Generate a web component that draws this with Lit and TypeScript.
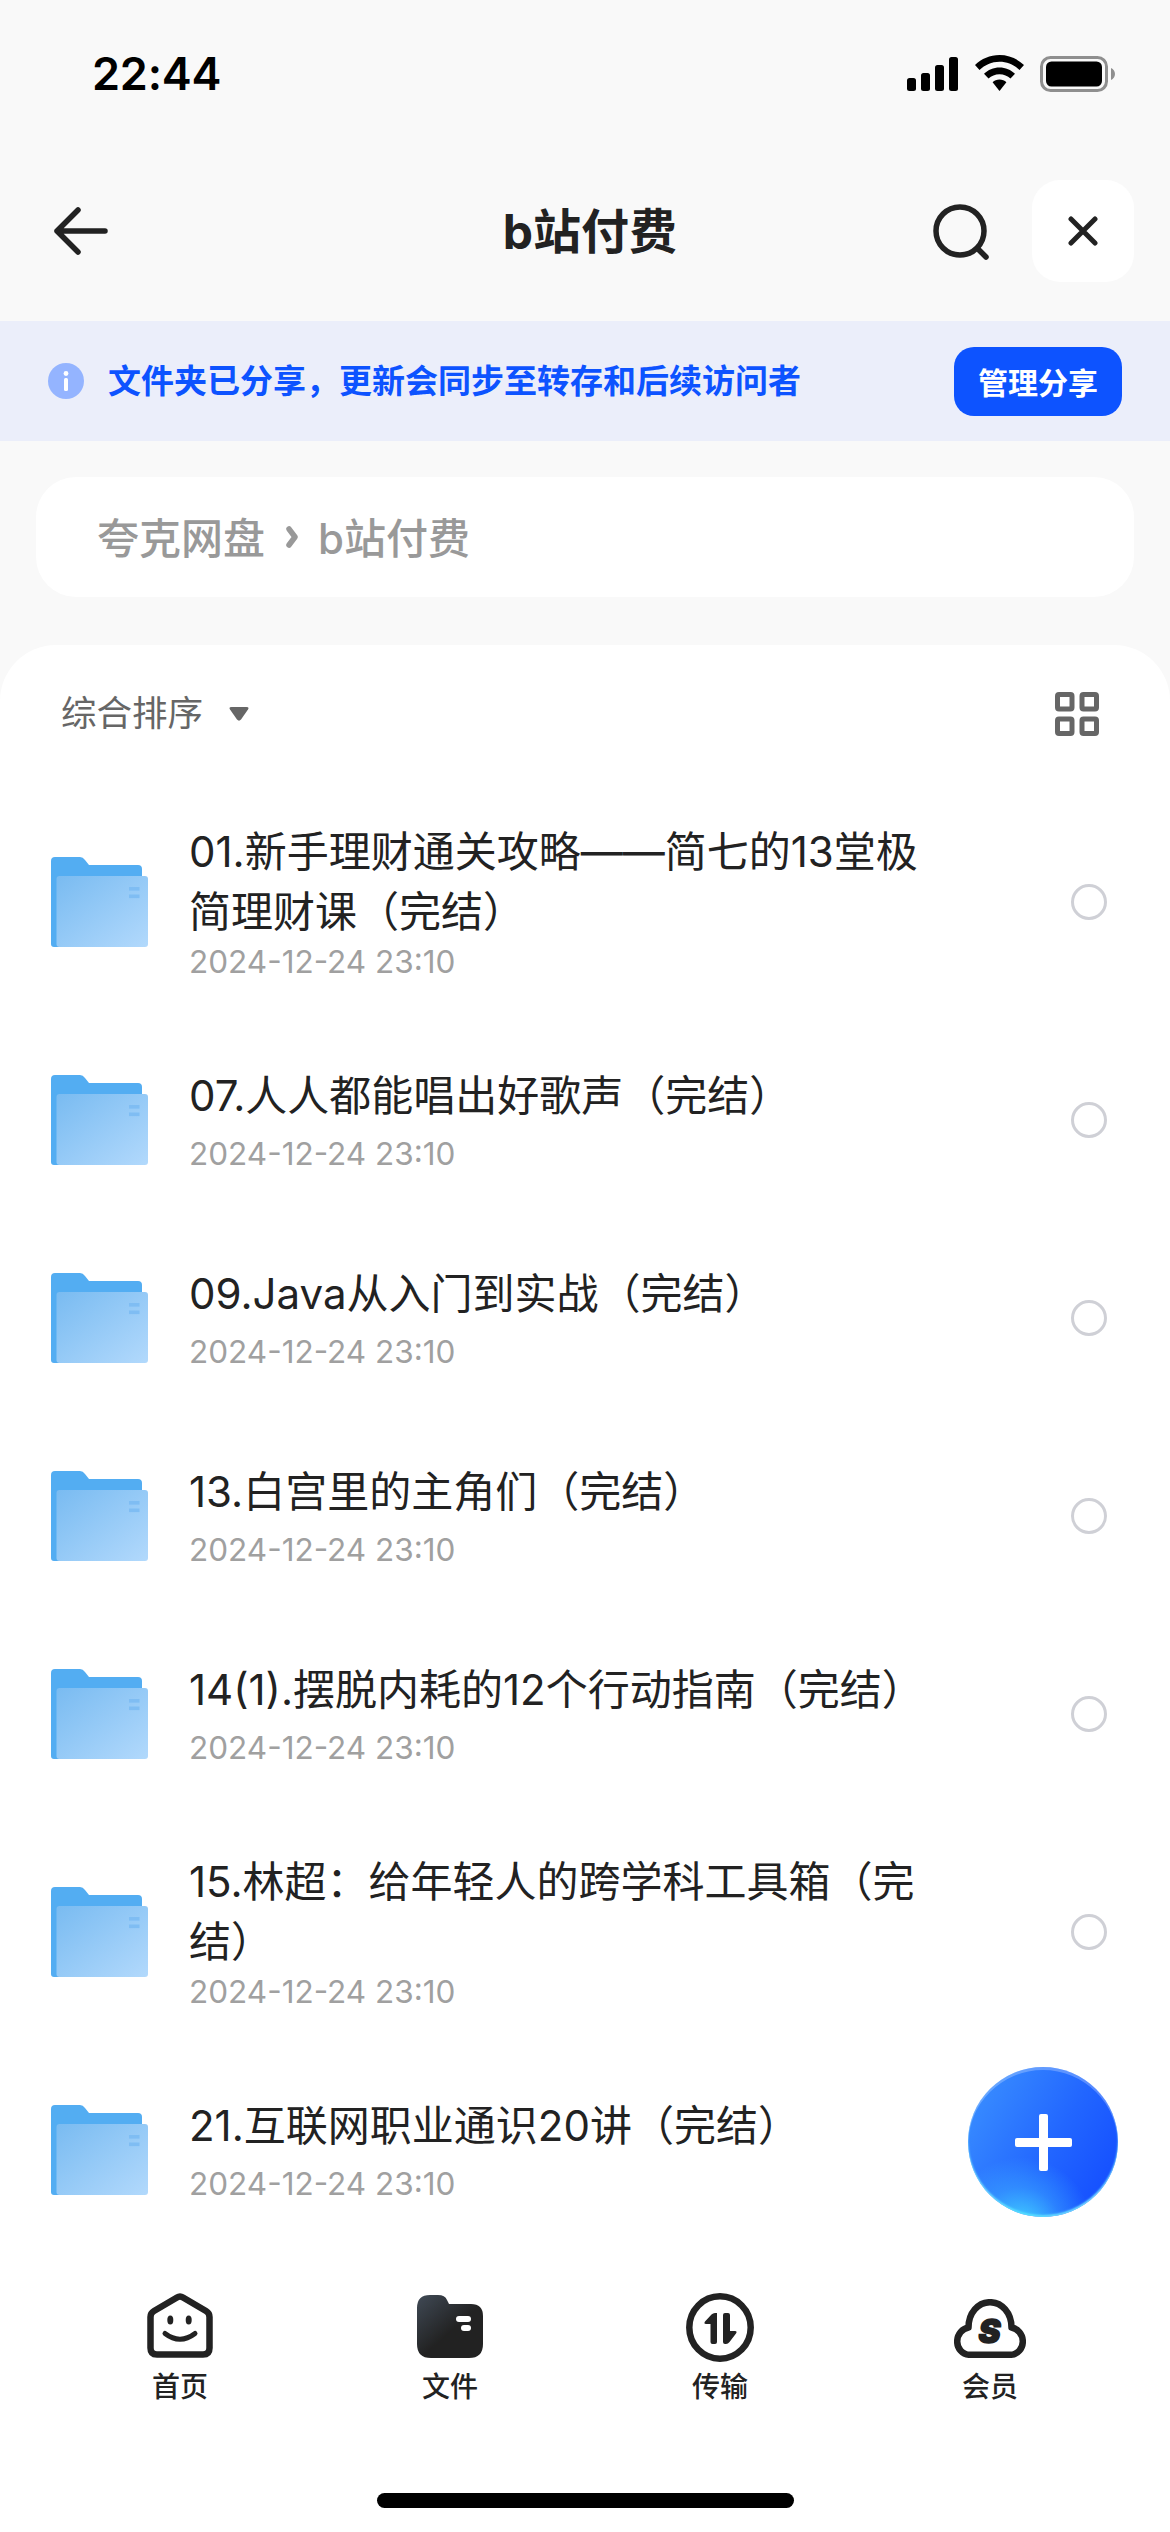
import { LitElement, html, css } from "lit";
import { customElement } from "lit/decorators.js";

const rows = [
  { t: "01.新手理财通关攻略——简七的13堂极简理财课（完结）", multi: true },
  { t: "07.人人都能唱出好歌声（完结）", multi: false },
  { t: "09.Java从入门到实战（完结）", multi: false },
  { t: "13.白宫里的主角们（完结）", multi: false },
  { t: "14(1).摆脱内耗的12个行动指南（完结）", multi: false },
  { t: "15.林超：给年轻人的跨学科工具箱（完结）", multi: true },
  { t: "21.互联网职业通识20讲（完结）", multi: false },
];

const folder = (i: number) => html`<svg class="folder" viewBox="0 0 97 90" width="97" height="90">
  <defs><linearGradient id="fg${i}" x1="0" y1="0" x2="1" y2="1">
    <stop offset="0" stop-color="#79bbf1"/><stop offset="1" stop-color="#b2d9fc"/>
  </linearGradient></defs>
  <path d="M4 0H29Q32 0 34 3L38 8H87Q91 8 91 12V90H3Q0 90 0 87V4Q0 0 4 0Z" fill="#53adf2"/>
  <rect x="5.5" y="19" width="91.5" height="71" rx="3" fill="url(#fg${i})"/>
  <rect x="78" y="30" width="10.5" height="3.6" fill="#7fbdf3"/>
  <rect x="78" y="37.5" width="10.5" height="3.6" fill="#7fbdf3"/>
</svg>`;

@customElement("app-root")
export class AppRoot extends LitElement {
  static styles = css`
    :host {
      display: flex; flex-direction: column; width: 1170px; height: 2532px; overflow: hidden;
      position: relative; background: #f9f9f9; color: #222;
      font-family: Inter, "Noto Sans CJK SC", sans-serif;
    }
    .status { height: 109px; flex: none; display: flex; align-items: flex-start; justify-content: space-between; padding: 50px 55px 0 92px; box-sizing: border-box; }
    .time { font-size: 45px; line-height: 48px; font-weight: 600; color: #000; letter-spacing: -0.2px; }
    .sicons { display: flex; align-items: flex-start; gap: 17px; margin-top: 5px; }
    .sig { margin-top: 2px; }
    .bat { margin-top: 1px; margin-left: -1px; }
    .nav { height: 212px; flex: none; box-sizing: border-box; padding: 71px 36px 0 54px; display: flex; align-items: flex-start; position: relative; }
    .nav .back { margin-top: 27px; }
    .title { position: absolute; left: 10px; right: 0; top: 93px; text-align: center; font-size: 48px; line-height: 60px; font-weight: 700; color: #222; }
    .nav .search { margin-left: auto; margin-top: 24px; }
    .closebtn { width: 102px; height: 102px; margin-left: 43px; background: #fff; border-radius: 28px; display: flex; align-items: center; justify-content: center; }
    .banner { height: 120px; flex: none; background: #ebeefa; display: flex; align-items: center; padding: 0 48px 0 48px; box-sizing: border-box; }
    .info { margin-right: 24px; flex: none; }
    .banner .msg { font-size: 33px; font-weight: 700; color: #0d53ff; line-height: 44px; }
    .mgr { margin-left: auto; width: 168px; height: 69px; border-radius: 20px; background: #0d53ff; color: #fff; font-size: 30px; font-weight: 700; display: flex; align-items: center; justify-content: center; }
    .crumb { flex: none; margin: 36px 36px 48px; height: 120px; border-radius: 40px; background: #fff; display: flex; align-items: center; box-sizing: border-box; padding: 0 0 3px 61px; font-size: 42px; font-weight: 500; color: #999; }
    .crumb svg { margin: 3px 20px 0 21px; }
    .sheet { flex: 1; min-height: 0; background: #fff; border-radius: 56px 56px 0 0; display: flex; flex-direction: column; }
    .tools { height: 137.5px; flex: none; box-sizing: border-box; display: flex; align-items: flex-start; padding: 44px 71px 0 61px; }
    .sort { font-size: 35.5px; color: #666; line-height: 50px; }
    .tri { margin: 18px 0 0 26px; }
    .grid { margin: 3px 0 0 auto; }
    .row { display: flex; align-items: center; height: 198px; padding: 0 63px 0 51px; box-sizing: border-box; }
    .row.multi { height: 238px; }
    .folder { flex: none; margin-right: 41px; }
    .body { width: 735px; display: flex; flex-direction: column; gap: 8px; }
    .multi .body { gap: 0; }
    .name { font-size: 42px; line-height: 60px; color: #222; }
    .date { font-size: 31.5px; line-height: 40px; color: #a0a0a0; }
    .radio { margin-left: auto; width: 36px; height: 36px; border-radius: 50%; border: 3px solid #cfd0d6; box-sizing: border-box; flex: none; }
    .spacer { flex: 1; }
    .tabs { flex: none; display: grid; grid-template-columns: repeat(4, 270px); padding: 0 45px; height: 145px; }
    .tab { display: flex; flex-direction: column; align-items: center; justify-content: flex-end; font-size: 28px; line-height: 36px; font-weight: 500; color: #222; }
    .tab .ic { height: 70px; display: flex; align-items: flex-end; justify-content: center; margin-bottom: 11px; }
    .ic .transfer { margin-bottom: -4px; }
    .homebar { flex: none; height: 127px; display: flex; justify-content: center; align-items: flex-start; box-sizing: border-box; padding-top: 88px; }
    .indicator { width: 417px; height: 15px; border-radius: 7.5px; background: #000; }
    .fab { position: absolute; left: 968px; top: 2067px; width: 150px; height: 150px; border-radius: 50%;
      background: linear-gradient(120deg, #3d94ff 0%, #2266ff 55%, #1148ff 100%);
      display: flex; align-items: center; justify-content: center; overflow: hidden;
      box-shadow: inset 0 3px 0 rgba(255,255,255,.25), inset 0 -2px 2px rgba(130,240,255,.9); }
    .fab::before { content: ""; position: absolute; inset: 0; border-radius: 50%; background: radial-gradient(circle at 35% 108%, rgba(70,225,255,.95) 0%, rgba(70,200,255,.35) 22%, rgba(70,200,255,0) 38%); }
    .fab svg { position: relative; }
  `;

  render() {
    return html`
      <div class="status">
        <div class="time">22:44</div>
        <div class="sicons">
          <svg class="sig" width="51" height="34" viewBox="0 0 51 34" fill="#000">
            <rect x="0" y="21" width="9" height="13" rx="2.5"/><rect x="14" y="16" width="9" height="18" rx="2.5"/>
            <rect x="28" y="8" width="9" height="26" rx="2.5"/><rect x="42" y="0" width="9" height="34" rx="2.5"/>
          </svg>
          <svg width="49" height="36" viewBox="0 0 49 36" fill="#000">
            <path d="M24.5 0C34 0 42.5 3.8 49 10L44.5 15C39.2 10 32.2 6.8 24.5 6.8S9.8 10 4.5 15L0 10C6.5 3.8 15 0 24.5 0Z"/>
            <path d="M24.5 12.5C30.5 12.5 36 14.9 40 18.8L35.5 23.6C32.6 20.8 28.8 19.2 24.5 19.2S16.4 20.8 13.5 23.6L9 18.8C13 14.9 18.5 12.5 24.5 12.5Z"/>
            <path d="M24.5 24.5C27.2 24.5 29.6 25.5 31.4 27.2L24.5 36L17.6 27.2C19.4 25.5 21.8 24.5 24.5 24.5Z"/>
          </svg>
          <svg class="bat" width="75" height="36" viewBox="0 0 75 36">
            <rect x="1.5" y="1.5" width="65" height="33" rx="9" fill="none" stroke="#8f8f8f" stroke-width="3"/>
            <rect x="6" y="5.500" width="56" height="25" rx="5.5" fill="#000"/>
            <path d="M71 12C73.500 13 75 15.500 75 18S73.500 23 71 24Z" fill="#8f8f8f"/>
          </svg>
        </div>
      </div>
      <div class="nav">
        <svg class="back" width="54" height="48" viewBox="0 0 54 48" fill="none" stroke="#222" stroke-width="5.5" stroke-linecap="round" stroke-linejoin="round">
          <path d="M24 3L3 24L24 45M3 24H51"/>
        </svg>
        <div class="title">b站付费</div>
        <svg class="search" width="56" height="56" viewBox="0 0 56 56" fill="none" stroke="#222" stroke-width="5.5" stroke-linecap="round">
          <circle cx="27" cy="27" r="24"/><path d="M44.5 44.5L53 53"/>
        </svg>
        <div class="closebtn">
          <svg width="30" height="30" viewBox="0 0 30 30" fill="none" stroke="#222" stroke-width="5" stroke-linecap="round"><path d="M3 3L27 27M27 3L3 27"/></svg>
        </div>
      </div>
      <div class="banner">
        <svg class="info" width="36" height="36" viewBox="0 0 36 36">
          <circle cx="18" cy="18" r="18" fill="#94b4ff"/>
          <circle cx="18" cy="10.5" r="2.4" fill="#fff"/><rect x="16" y="15" width="4" height="13" rx="1.5" fill="#fff"/>
        </svg>
        <div class="msg">文件夹已分享，更新会同步至转存和后续访问者</div>
        <div class="mgr">管理分享</div>
      </div>
      <div class="crumb">夸克网盘<svg width="12" height="22" viewBox="0 0 12 22" fill="none" stroke="#999" stroke-width="5.500" stroke-linecap="round" stroke-linejoin="round"><path d="M3 3L9 11L3 19"/></svg>b站付费</div>
      <div class="sheet">
        <div class="tools">
          <span class="sort">综合排序</span>
          <svg class="tri" width="20" height="14" viewBox="0 0 20 14"><path d="M2.500 0H17.500Q20.500 0 19 2.500L12 12.500Q10 14.800 8 12.500L1 2.500Q-.5 0 2.500 0Z" fill="#666"/></svg>
          <svg class="grid" width="44" height="44" viewBox="0 0 44 44" fill="none" stroke="#666" stroke-width="5">
            <rect x="2.500" y="2.500" width="14.500" height="14.500" rx="1.500"/><rect x="27" y="2.500" width="14.500" height="14.500" rx="1.500"/>
            <rect x="2.500" y="27" width="14.500" height="14.500" rx="1.500"/><rect x="27" y="27" width="14.500" height="14.500" rx="1.500"/>
          </svg>
        </div>
        ${rows.map((r, i) => html`
          <div class="row ${r.multi ? "multi" : ""}">
            ${folder(i)}
            <div class="body">
              <div class="name">${r.t}</div>
              <div class="date">2024-12-24 23:10</div>
            </div>
            <div class="radio"></div>
          </div>`)}
        <div class="spacer"></div>
        <div class="tabs">
          <div class="tab"><div class="ic">
            <svg width="66" height="66" viewBox="0 0 66 66">
              <path d="M30 5.500Q33 3.500 36 5.500L59 19Q62.500 21 62.500 25V56Q62.500 62.500 56 62.500H10Q3.500 62.500 3.500 56V25Q3.500 21 7 19Z" fill="none" stroke="#222" stroke-width="6.500" stroke-linejoin="round"/>
              <ellipse cx="23.300" cy="28" rx="3" ry="4.500" fill="#222"/><ellipse cx="41.700" cy="28" rx="3" ry="4.500" fill="#222"/>
              <path d="M18 41.500Q33 53 48 41.500" fill="none" stroke="#222" stroke-width="5" stroke-linecap="round"/>
            </svg></div>首页</div>
          <div class="tab"><div class="ic">
            <svg width="66" height="63" viewBox="0 0 66 63">
              <defs><linearGradient id="fd" x1="0" y1="0" x2="0.7" y2="0.75"><stop offset="0" stop-color="#404a56"/><stop offset=".75" stop-color="#222"/><stop offset="1" stop-color="#222"/></linearGradient></defs>
              <path d="M13 0H21Q28 0 30 5L32 9H54Q66 9 66 21V49Q66 63 52 63H14Q0 63 0 49V13Q0 0 13 0Z" fill="url(#fd)"/>
              <rect x="39" y="21" width="15" height="6" rx="3" fill="#fff"/><rect x="44" y="30" width="10" height="6" rx="3" fill="#fff"/>
            </svg></div>文件</div>
          <div class="tab"><div class="ic">
            <svg class="transfer" width="68" height="69" viewBox="0 0 68 69">
              <ellipse cx="34" cy="34.500" rx="30.700" ry="31.200" fill="none" stroke="#222" stroke-width="6.500"/>
              <path d="M31 20V49Q31 51 29 51H26.500Q24.500 51 24.500 49V31H20Q17.500 31 19 28.500L25.500 21.500Q27 20 29 20Z" fill="#222"/>
              <path d="M37 22Q37 20 39 20H42Q44 20 44 22V38H49Q51.500 38 50 40.500L43.500 49Q42 51 40 51H39Q37 51 37 49Z" fill="#222"/>
            </svg></div>传输</div>
          <div class="tab"><div class="ic">
            <svg width="72" height="59" viewBox="0 0 72 59">
              <path d="M16 55.800H56C64 55.800 68.800 49 68.800 42.500C68.800 35 63.500 29.500 57.500 28.500C57.500 14 48 3.200 36 3.200C24 3.200 14.500 14 14.500 28.500C8.500 29.500 3.200 35 3.200 42.500C3.200 49 8 55.800 16 55.800Z" fill="none" stroke="#222" stroke-width="6.500" stroke-linejoin="round"/>
              <text x="35.500" y="44" text-anchor="middle" font-size="33" font-weight="900" font-style="italic" fill="#222" stroke="#222" stroke-width="1.500">S</text>
            </svg></div>会员</div>
        </div>
        <div class="homebar"><div class="indicator"></div></div>
      </div>
      <div class="fab">
        <svg width="57" height="57" viewBox="0 0 57 57" fill="#fff"><rect x="24" y="0" width="9" height="57" rx="2"/><rect x="0" y="24" width="57" height="9" rx="2"/></svg>
      </div>
    `;
  }
}
